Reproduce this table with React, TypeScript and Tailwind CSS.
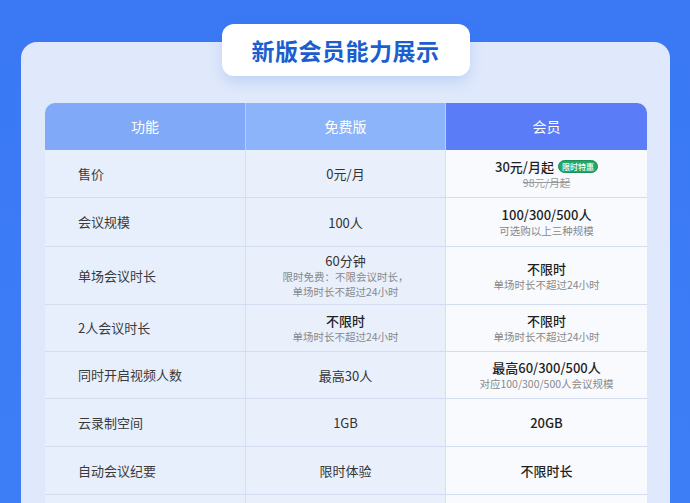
import React from 'react'

type Row = {
    name: string
    free: string
    freeSub?: string[]
    freeBold?: boolean
    vip: string
    vipSub?: string
    badge?: boolean
    strike?: string
    h: string
}

const rows: Row[] = [
    { name: '售价', free: '0元/月', vip: '30元/月起', badge: true, strike: '98元/月起', h: 'h-[48px]' },
    { name: '会议规模', free: '100人', vip: '100/300/500人', vipSub: '可选购以上三种规模', h: 'h-[49px]' },
    {
        name: '单场会议时长',
        free: '60分钟',
        freeSub: ['限时免费：不限会议时长，', '单场时长不超过24小时'],
        vip: '不限时',
        vipSub: '单场时长不超过24小时',
        h: 'h-[58px]',
    },
    {
        name: '2人会议时长',
        free: '不限时',
        freeSub: ['单场时长不超过24小时'],
        freeBold: true,
        vip: '不限时',
        vipSub: '单场时长不超过24小时',
        h: 'h-[47px]',
    },
    { name: '同时开启视频人数', free: '最高30人', vip: '最高60/300/500人', vipSub: '对应100/300/500人会议规模', h: 'h-[47px]' },
    { name: '云录制空间', free: '1GB', vip: '20GB', h: 'h-[48px]' },
    { name: '自动会议纪要', free: '限时体验', vip: '不限时长', h: 'h-[48px]' },
    { name: '', free: '', vip: '', h: 'h-[48px]' },
]

export default function App() {
    return (
        <div
            className="w-[690px] h-[503px] overflow-hidden bg-gradient-to-b from-[#3a78f4] to-[#3d7ef6] pt-[42px] pl-[21px] pr-[20px]"
            style={{ fontFamily: '"Noto Sans CJK SC", "Noto Sans", sans-serif' }}
        >
            <div className="relative rounded-[16px] bg-[#dfe9fb] pl-6 pr-[23px] pt-[61px] h-[520px]">
                <div className="absolute left-1/2 -translate-x-1/2 -top-[18px] w-[248px] h-[52px] rounded-[12px] bg-white shadow-[0_6px_14px_rgba(60,110,220,0.18)] flex items-center justify-center">
                    <span className="text-[23px] font-bold text-[#1b5ecf] tracking-[0.5px]">新版会员能力展示</span>
                </div>

                <div className="rounded-t-[10px] overflow-hidden">
                    <div className="grid grid-cols-[201px_200px_201px] h-[47px] text-[14px] text-white">
                        <div className="bg-[#80aaf8] border-r border-[#b3cffa] flex items-center justify-center">功能</div>
                        <div className="bg-[#8bb4fa] border-r border-[#b3cffa] flex items-center justify-center">免费版</div>
                        <div className="bg-[#5a7cf7] flex items-center justify-center">会员</div>
                    </div>

                    {rows.map((r, i) => (
                        <div key={i} className={`grid grid-cols-[201px_200px_201px] ${r.h} border-b border-[#d3ddef]`}>
                            <div className="bg-[#e8effc] border-r border-[#d3e0f5] flex items-center pl-[33px] text-[13px] text-[#3a3a3a]">
                                {r.name}
                            </div>
                            <div className="bg-[#e9f0fc] border-r border-[#d3e0f5] flex flex-col items-center justify-center text-center">
                                <div className={`text-[13px] leading-[17px] ${r.freeBold ? 'text-[#222] font-medium' : 'text-[#333]'}`}>
                                    {r.free}
                                </div>
                                {r.freeSub?.map((s, j) => (
                                    <div key={j} className="text-[10.5px] leading-[15px] text-[#888]">
                                        {s}
                                    </div>
                                ))}
                            </div>
                            <div className="bg-[#f8fafe] flex flex-col items-center justify-center text-center">
                                <div className="flex items-center gap-[2px] text-[13px] leading-[17px] font-medium text-[#1f1f1f]">
                                    {r.vip}
                                    {r.badge && (
                                        <span className="ml-[2px] rounded-full bg-[#24a86a] border border-[#1d8f58] px-[3px] text-[8px] leading-[11px] text-white font-medium">
                                            限时特惠
                                        </span>
                                    )}
                                </div>
                                {r.strike && (
                                    <div className="text-[10.5px] leading-[15px] text-[#999] line-through">{r.strike}</div>
                                )}
                                {r.vipSub && (
                                    <div className="text-[10.5px] leading-[15px] text-[#888]">{r.vipSub}</div>
                                )}
                            </div>
                        </div>
                    ))}
                </div>
            </div>
        </div>
    )
}
